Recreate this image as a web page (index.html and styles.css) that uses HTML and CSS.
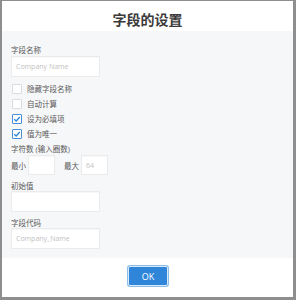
FILE: index.html
```html
<!DOCTYPE html>
<html lang="zh">
<head>
    <meta charset="UTF-8">
    <title>字段的设置</title>
    <link rel="stylesheet" href="styles.css">
</head>
<body>
    <div class="dialog">
        <div class="dialog-header">字段的设置</div>

        <div class="dialog-body">
            <div class="field-label">字段名称</div>
            <div class="text-input wide"><span class="placeholder">Company Name</span></div>

            <div class="check-list">
                <div class="check-row"><span class="checkbox"></span>隐藏字段名称</div>
                <div class="check-row"><span class="checkbox"></span>自动计算</div>
                <div class="check-row">
                    <span class="checkbox checked">
                        <svg viewBox="0 0 10 10" width="8" height="8"><path d="M1.5 5.2 L4 7.5 L8.5 2.5" fill="none" stroke="#2f86d8" stroke-width="1.6"/></svg>
                    </span>设为必填项
                </div>
                <div class="check-row">
                    <span class="checkbox checked">
                        <svg viewBox="0 0 10 10" width="8" height="8"><path d="M1.5 5.2 L4 7.5 L8.5 2.5" fill="none" stroke="#2f86d8" stroke-width="1.6"/></svg>
                    </span>值为唯一
                </div>
            </div>

            <div class="field-label count-label">字符数 (输入圈数)</div>
            <div class="range-row">
                <span class="range-label">最小</span>
                <div class="text-input small"></div>
                <span class="range-label max">最大</span>
                <div class="text-input small"><span class="placeholder">64</span></div>
            </div>

            <div class="field-label spaced">初始值</div>
            <div class="text-input wide"></div>

            <div class="field-label spaced">字段代码</div>
            <div class="text-input wide"><span class="placeholder">Company_Name</span></div>
        </div>

        <div class="dialog-footer">
            <button class="btn-ok">OK</button>
        </div>
    </div>
</body>
</html>
```

FILE: styles.css
```css
html, body {
    margin: 0;
    padding: 0;
}

body {
    width: 296px;
    height: 300px;
    background: #8e8e8e;
    font-family: "Open Sans", "Noto Sans CJK SC", sans-serif;
    color: #5a5a5a;
    overflow: hidden;
}

.dialog {
    margin: 1px 3px 0 2px;
    height: 296px;
    background: #fff;
    display: flex;
    flex-direction: column;
}

.dialog-header {
    padding: 10px 0 2px;
    line-height: 18px;
    font-size: 14px;
    font-weight: bold;
    color: #3a3a3a;
    text-align: center;
}

.dialog-body {
    background: #f6f7f9;
    padding: 13px 9px 9px;
    display: flex;
    flex-direction: column;
    align-items: flex-start;
}

.field-label {
    font-size: 7.5px;
    line-height: 12px;
    color: #5a5a5a;
}

.field-label.spaced {
    line-height: 10px;
    margin-top: 6px;
}

.count-label {
    margin-top: 3px;
    line-height: 11px;
}

.text-input {
    box-sizing: border-box;
    height: 21px;
    background: #fff;
    border: 1px solid #ebebeb;
    box-shadow: inset 0 1px 1px rgba(0,0,0,0.03);
    display: flex;
    align-items: center;
    padding-left: 4px;
}

.text-input.wide {
    width: 89px;
}

.text-input.small {
    width: 27px;
    height: 20px;
}

.placeholder {
    font-size: 7px;
    color: #c2c2c2;
}

.check-list {
    margin-top: 4px;
    display: flex;
    flex-direction: column;
}

.check-row {
    height: 15px;
    display: flex;
    align-items: center;
    font-size: 7.5px;
    color: #5a5a5a;
}

.checkbox {
    box-sizing: border-box;
    width: 10px;
    height: 10px;
    margin: 0 5px 0 1px;
    background: #fff;
    border: 1px solid #dcdcdc;
    border-radius: 1px;
    display: flex;
    align-items: center;
    justify-content: center;
}

.checkbox.checked {
    border-color: #4a90d9;
}

.range-row {
    display: flex;
    align-items: center;
}

.range-label {
    font-size: 7.5px;
    margin-right: 2px;
}

.range-label.max {
    margin-left: 9px;
}

.dialog-footer {
    flex: 1;
    display: flex;
    justify-content: center;
    align-items: flex-start;
    padding-top: 8px;
}

.btn-ok {
    width: 40px;
    height: 20px;
    margin-left: 1px;
    background: #2f86d8;
    color: #fff;
    border: 1px solid #d9ebfb;
    border-radius: 2px;
    box-shadow: 0 0 0 1px #8fbde9;
    font-family: "Open Sans", sans-serif;
    font-size: 9px;
    padding: 0;
}
```
